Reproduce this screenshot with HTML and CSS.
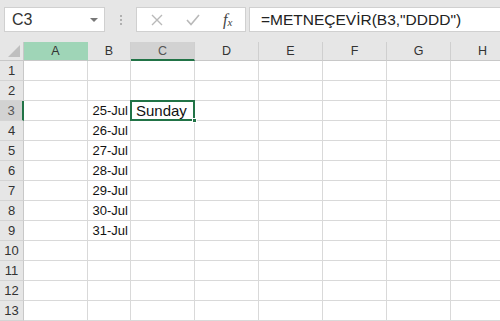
FILE: index.html
```html
<!DOCTYPE html>
<html>
<head>
<meta charset="utf-8">
<link rel="stylesheet" href="styles.css">
</head>
<body>
<div class="toolbar">
  <div class="namebox"><span class="name">C3</span><span class="arrow"></span></div>
  <div class="dots"><i></i><i></i><i></i></div>
  <div class="icons">
    <svg class="ic" width="14" height="14" viewBox="0 0 14 14"><path d="M2 2 L12 12 M12 2 L2 12" stroke="#b9b9b9" stroke-width="1.4" fill="none"/></svg>
    <svg class="ic" width="16" height="14" viewBox="0 0 16 14"><path d="M2 7 L6 11.5 L14 2" stroke="#b9b9b9" stroke-width="1.6" fill="none"/></svg>
    <span class="fx"><i>f</i><sub>x</sub></span>
  </div>
  <div class="formula">=METNEÇEVİR(B3,"DDDD")</div>
</div>
<div class="sheet">
  <div class="corner"><span class="tri"></span></div>
  <div class="ch hov">A</div><div class="ch">B</div><div class="ch sel">C</div><div class="ch">D</div><div class="ch">E</div><div class="ch">F</div><div class="ch">G</div><div class="ch">H</div>

  <div class="rh">1</div><div class="c"></div><div class="c"></div><div class="c"></div><div class="c"></div><div class="c"></div><div class="c"></div><div class="c"></div><div class="c"></div>
  <div class="rh">2</div><div class="c"></div><div class="c"></div><div class="c"></div><div class="c"></div><div class="c"></div><div class="c"></div><div class="c"></div><div class="c"></div>
  <div class="rh sel">3</div><div class="c"></div><div class="c num">25-Jul</div><div class="c active"><span class="big">Sunday</span><span class="handle"></span></div><div class="c"></div><div class="c"></div><div class="c"></div><div class="c"></div><div class="c"></div>
  <div class="rh">4</div><div class="c"></div><div class="c num">26-Jul</div><div class="c"></div><div class="c"></div><div class="c"></div><div class="c"></div><div class="c"></div><div class="c"></div>
  <div class="rh">5</div><div class="c"></div><div class="c num">27-Jul</div><div class="c"></div><div class="c"></div><div class="c"></div><div class="c"></div><div class="c"></div><div class="c"></div>
  <div class="rh">6</div><div class="c"></div><div class="c num">28-Jul</div><div class="c"></div><div class="c"></div><div class="c"></div><div class="c"></div><div class="c"></div><div class="c"></div>
  <div class="rh">7</div><div class="c"></div><div class="c num">29-Jul</div><div class="c"></div><div class="c"></div><div class="c"></div><div class="c"></div><div class="c"></div><div class="c"></div>
  <div class="rh">8</div><div class="c"></div><div class="c num">30-Jul</div><div class="c"></div><div class="c"></div><div class="c"></div><div class="c"></div><div class="c"></div><div class="c"></div>
  <div class="rh">9</div><div class="c"></div><div class="c num">31-Jul</div><div class="c"></div><div class="c"></div><div class="c"></div><div class="c"></div><div class="c"></div><div class="c"></div>
  <div class="rh">10</div><div class="c"></div><div class="c"></div><div class="c"></div><div class="c"></div><div class="c"></div><div class="c"></div><div class="c"></div><div class="c"></div>
  <div class="rh">11</div><div class="c"></div><div class="c"></div><div class="c"></div><div class="c"></div><div class="c"></div><div class="c"></div><div class="c"></div><div class="c"></div>
  <div class="rh">12</div><div class="c"></div><div class="c"></div><div class="c"></div><div class="c"></div><div class="c"></div><div class="c"></div><div class="c"></div><div class="c"></div>
  <div class="rh">13</div><div class="c"></div><div class="c"></div><div class="c"></div><div class="c"></div><div class="c"></div><div class="c"></div><div class="c"></div><div class="c"></div>
</div>
</body>
</html>
```

FILE: styles.css
```css
* { box-sizing: border-box; }
html, body { margin: 0; padding: 0; }
body {
  width: 500px;
  height: 321px;
  overflow: hidden;
  background: #e6e6e6;
  font-family: "Liberation Sans", Arial, sans-serif;
}
.toolbar {
  height: 42px;
  display: flex;
  align-items: flex-start;
  padding: 7px 0 0 4px;
}
.namebox {
  width: 101px;
  height: 25px;
  background: #fff;
  border: 1px solid #d0d0d0;
  display: flex;
  align-items: center;
  justify-content: space-between;
  padding: 0 6px 0 7px;
  color: #333;
  font-size: 16px;
}
.arrow {
  width: 0; height: 0;
  border-left: 4px solid transparent;
  border-right: 4px solid transparent;
  border-top: 4px solid #777;
}
.dots {
  width: 31px;
  height: 25px;
  display: flex;
  flex-direction: column;
  align-items: center;
  justify-content: center;
  gap: 2px;
}
.dots i {
  width: 2px; height: 2px;
  background: #b0b0b0;
  display: block;
}
.icons {
  width: 110px;
  height: 25px;
  background: #fff;
  border: 1px solid #d0d0d0;
  display: flex;
  align-items: center;
  padding: 0 0 0 13px;
}
.icons .ic:first-child { margin-right: 21px; }
.icons .ic:nth-child(2) { margin-right: 22px; }
.fx {
  font-family: "Liberation Serif", "Times New Roman", serif;
  color: #444;
  font-size: 16px;
  font-style: italic;
  line-height: 1;
}
.fx sub { font-size: 11px; vertical-align: -1px; font-style: italic; }
.formula {
  margin-left: 3px;
  flex: 1;
  height: 25px;
  background: #fff;
  border: 1px solid #d0d0d0;
  border-right: 0;
  padding-left: 11px;
  font-size: 15.5px;
  color: #222;
  line-height: 23px;
  white-space: nowrap;
}
.sheet {
  display: grid;
  grid-template-columns: 24px 64px 43px 64px 64px 64px 64px 64px 64px;
  grid-template-rows: 19px repeat(13, 20px);
  background: #fff;
  width: 515px;
}
.corner {
  background: #e6e6e6;
  border-right: 1px solid #c8c8c8;
  border-bottom: 1px solid #c8c8c8;
  position: relative;
}
.tri {
  position: absolute;
  right: 3px; bottom: 3px;
  width: 0; height: 0;
  border-left: 12px solid transparent;
  border-bottom: 12px solid #bfbfbf;
}
.ch {
  background: #e6e6e6;
  border-right: 1px solid #cfcfcf;
  border-bottom: 1px solid #c8c8c8;
  text-align: center;
  font-size: 12.5px;
  line-height: 19px;
  color: #333;
}
.ch.hov { background: #9fd5b7; border-right-color: #9fd5b7; }
.ch.sel { background: #d2d2d2; border-bottom: 2px solid #217346; color: #555; }
.rh {
  background: #e6e6e6;
  border-right: 1px solid #c8c8c8;
  border-bottom: 1px solid #d4d4d4;
  text-align: center;
  font-size: 13px;
  line-height: 20px;
  color: #333;
}
.rh.sel { background: #d2d2d2; border-right: 2px solid #217346; color: #555; }
.c {
  border-right: 1px solid #d9d9d9;
  border-bottom: 1px solid #d9d9d9;
  font-size: 13px;
  line-height: 20px;
  color: #111;
  white-space: nowrap;
}
.c.num { text-align: right; padding-right: 2px; }
.c.active { position: relative; }
.c.active::after {
  content: "";
  position: absolute;
  left: -1px; top: -1px; right: -1px; bottom: -1px;
  border: 2px solid #217346;
}
.big {
  font-size: 15px;
  padding-left: 5px;
}
.handle {
  position: absolute;
  right: -3px; bottom: -3px;
  width: 5px; height: 5px;
  background: #217346;
  border: 1px solid #fff;
  z-index: 2;
}
```
